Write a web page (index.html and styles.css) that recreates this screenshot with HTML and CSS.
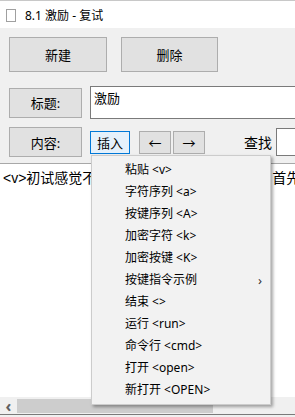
FILE: index.html
```html
<!DOCTYPE html>
<html lang="zh-CN">
<head>
  <meta charset="UTF-8" />
  <title>8.1 激励 - 复试</title>
  <link rel="stylesheet" href="styles.css">
</head>
<body>
  <div class="titlebar">
    <span class="app-icon"></span>
    <span class="title">8.1 激励 - 复试</span>
  </div>

  <div class="row row-top">
    <button class="btn btn-big">新建</button>
    <button class="btn btn-big">删除</button>
  </div>

  <div class="row row-title">
    <button class="btn btn-label">标题:</button>
    <div class="field">激励</div>
  </div>

  <div class="row row-content">
    <button class="btn btn-label">内容:</button>
    <button class="btn btn-small btn-active">插入</button>
    <button class="btn btn-arrow">←</button>
    <button class="btn btn-arrow btn-next">→</button>
    <span class="find-label">查找</span>
    <div class="find-field"></div>

    <div class="menu">
      <div class="menu-item">粘贴 &lt;v&gt;</div>
      <div class="menu-item">字符序列 &lt;a&gt;</div>
      <div class="menu-item">按键序列 &lt;A&gt;</div>
      <div class="menu-item">加密字符 &lt;k&gt;</div>
      <div class="menu-item">加密按键 &lt;K&gt;</div>
      <div class="menu-item has-sub">按键指令示例<span class="sub-arrow">›</span></div>
      <div class="menu-item">结束 &lt;&gt;</div>
      <div class="menu-item">运行 &lt;run&gt;</div>
      <div class="menu-item">命令行 &lt;cmd&gt;</div>
      <div class="menu-item">打开 &lt;open&gt;</div>
      <div class="menu-item">新打开 &lt;OPEN&gt;</div>
    </div>
  </div>

  <div class="editor">
    <div class="editor-text">&lt;v&gt;初试感觉不错，按要点再练习2遍以后。首先打开</div>
  </div>
  <div class="hscroll">
    <span class="hscroll-arrow">‹</span>
    <div class="hscroll-thumb"></div>
  </div>
</body>
</html>
```

FILE: styles.css
```css
body {
  margin: 0;
  background: #f0f0f0;
  font-family: "Noto Sans", "Noto Sans CJK SC", sans-serif;
  font-size: 12px;
  color: #000;
  overflow: hidden;
}
.titlebar {
  height: 27px;
  background: #fff;
  border-top: 1px solid #c8c8c8;
  display: flex;
  align-items: center;
  padding-left: 6px;
}
.app-icon {
  width: 8px;
  height: 11px;
  border: 1px solid #a0a0a0;
  margin-top: 2px;
}
.title {
  margin-left: 9px;
  font-size: 12px;
  margin-top: 1px;
}
.row {
  display: flex;
  align-items: center;
  padding-left: 9px;
}
.row-top {
  padding-top: 9px;
  gap: 14px;
}
.btn {
  font-family: "Noto Sans", "Noto Sans CJK SC", sans-serif;
  font-size: 13px;
  background: #e1e1e1;
  border: 1px solid #adadad;
  padding: 0;
  margin: 0;
  color: #000;
}
.btn-big {
  width: 98px;
  height: 35px;
}
.btn-big + .btn-big {
  width: 97px;
}
.row-title {
  margin-top: 14px;
  height: 33px;
}
.btn-label {
  width: 73px;
  height: 30px;
}
.field {
  margin-left: 8px;
  flex: 1;
  background: #fff;
  border: 1px solid #7a7a7a;
  border-right: none;
  font-size: 13px;
  padding: 1px 0 0 3px;
  box-sizing: border-box;
  height: 33px;
}
.row-content {
  position: relative;
  margin-top: 8px;
  height: 30px;
}
.btn-small {
  margin-left: 8px;
  width: 40px;
  height: 23px;
}
.btn-active {
  background: #e5f1fb;
  border-color: #0078d7;
}
.btn-arrow {
  width: 32px;
  height: 23px;
  margin-left: 9px;
  font-size: 13px;
}
.btn-next {
  margin-left: 2px;
}
.find-label {
  margin-left: 39px;
  font-size: 14px;
}
.find-field {
  margin-left: 4px;
  flex: 1;
  height: 26px;
  background: #fff;
  border: 1px solid #7a7a7a;
  border-right: none;
}
.menu {
  position: absolute;
  left: 91px;
  top: 28px;
  width: 178px;
  padding: 3px 0;
  background: #f2f2f2;
  border: 1px solid #cccccc;
  box-shadow: 2px 2px 3px rgba(0, 0, 0, 0.35);
  z-index: 2;
}
.menu-item {
  height: 22px;
  line-height: 22px;
  padding-left: 33px;
  padding-right: 8px;
  font-size: 12px;
  display: flex;
  align-items: center;
}
.sub-arrow {
  margin-left: auto;
  font-size: 13px;
  color: #333;
}
.editor {
  margin-top: 6px;
  height: 233px;
  background: #fff;
  border-top: 1px solid #a8a8a8;
  overflow: hidden;
}
.editor-text {
  white-space: nowrap;
  padding: 3px 0 0 3px;
  font-family: "Liberation Sans", "Noto Sans CJK SC", sans-serif;
  font-size: 14px;
}
.hscroll {
  height: 17px;
  background: #f0f0f0;
  border-bottom: 1px solid #7a7a7a;
  display: flex;
  align-items: center;
}
.hscroll-arrow {
  width: 17px;
  text-align: center;
  font-size: 16px;
  font-weight: bold;
  color: #606060;
  line-height: 14px;
}
.hscroll-thumb {
  width: 196px;
  height: 14px;
  background: #cdcdcd;
}
```
